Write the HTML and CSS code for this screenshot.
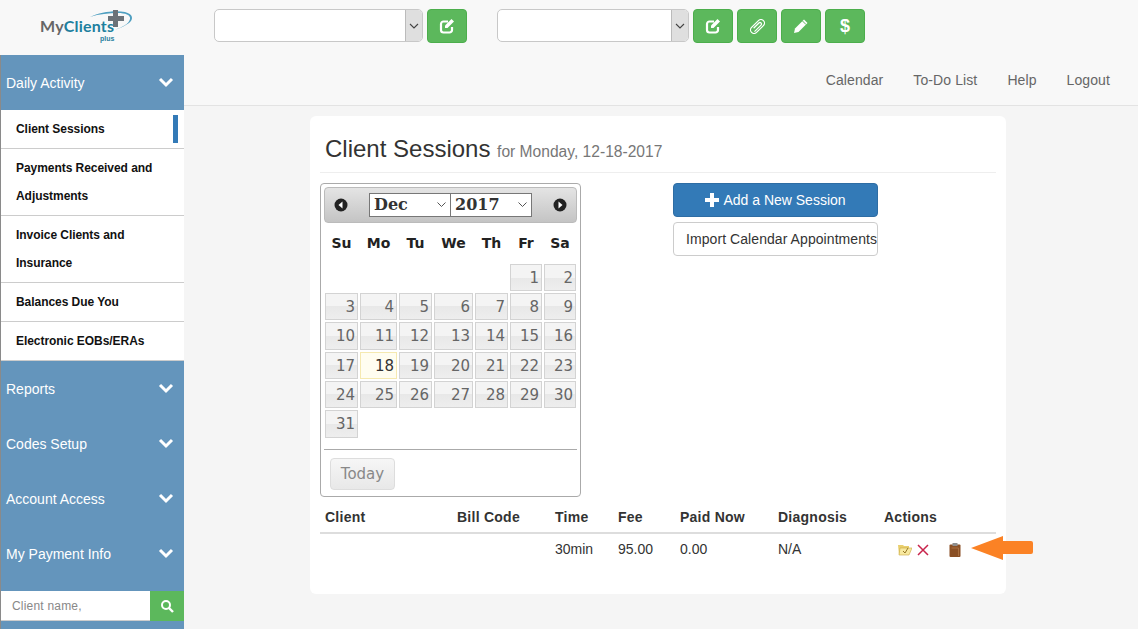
FILE: index.html
```html
<!DOCTYPE html>
<html lang="en">
<head>
  <meta charset="UTF-8" />
  <meta name="viewport" content="width=device-width, initial-scale=1" />
  <title>Client Sessions</title>
  <link rel="stylesheet" href="styles.css">
</head>
<body>
  <header class="topbar">
    <div class="logo">
      <span class="logo-text"><span class="logo-my">My</span>Clients</span>
      <span class="logo-plus">plus</span>
      <svg class="logo-mark" width="46" height="26" viewBox="0 0 46 26">
        <path d="M1 8C11 3 26 1 36 3c8 2 9 7 4 11-4 3-9 5-14 7 7-3 14-6 15-11 1-4-5-6-12-6C20 4 10 5 1 8z" fill="#4f9fc0"/>
        <path d="M24 1h5v6h6v5h-6v6h-5v-6h-5V7h5z" fill="#6b7278"/>
      </svg>
    </div>
    <div class="top-controls">
      <div class="combo combo-first"><span class="combo-arrow"><svg width="10" height="6" viewBox="0 0 10 6"><path d="M1 1l4 4 4-4" fill="none" stroke="#444" stroke-width="1.1"/></svg></span></div>
      <button class="btn-green" type="button"><svg width="16" height="16" viewBox="0 0 16 16"><path d="M13 9v3a2.500 2.500 0 0 1-2.500 2.500h-6A2.500 2.500 0 0 1 2 12V6a2.500 2.500 0 0 1 2.500-2.500H9" fill="none" stroke="#fff" stroke-width="2.200"/><path d="M6 7.500L12.500 1 15 3.500 8.500 10H6z" fill="#fff"/></svg></button>
      <div class="combo combo-second"><span class="combo-arrow"><svg width="10" height="6" viewBox="0 0 10 6"><path d="M1 1l4 4 4-4" fill="none" stroke="#444" stroke-width="1.1"/></svg></span></div>
      <div class="btn-row">
        <button class="btn-green" type="button"><svg width="16" height="16" viewBox="0 0 16 16"><path d="M13 9v3a2.500 2.500 0 0 1-2.500 2.500h-6A2.500 2.500 0 0 1 2 12V6a2.500 2.500 0 0 1 2.500-2.500H9" fill="none" stroke="#fff" stroke-width="2.200"/><path d="M6 7.500L12.500 1 15 3.500 8.500 10H6z" fill="#fff"/></svg></button>
        <button class="btn-green" type="button"><svg width="15" height="15" viewBox="0 0 17 17"><g transform="rotate(45 8.500 8.500)" fill="none" stroke="#fff" stroke-width="1.400"><rect x="4.500" y="-1" width="8" height="19" rx="4"/><path d="M6.800 13V4.500a1.700 1.700 0 0 1 3.400 0V15"/></g></svg></button>
        <button class="btn-green" type="button"><svg width="16" height="16" viewBox="0 0 16 16"><path d="M1 15l1-4.500L11 1.500 14.500 5l-9 9z" fill="#fff"/><path d="M9.500 3L13 6.500" stroke="#5cb85c"/></svg></button>
        <button class="btn-green btn-dollar" type="button">$</button>
      </div>
    </div>
  </header>

  <div class="layout">
    <aside class="sidebar">
      <div class="side-head">Daily Activity <svg class="chev" width="16" height="11" viewBox="0 0 16 11"><path d="M2 2l6 6 6-6" fill="none" stroke="#fff" stroke-width="3"/></svg></div>
      <ul class="side-menu">
        <li class="current">Client Sessions</li>
        <li>Payments Received and Adjustments</li>
        <li>Invoice Clients and Insurance</li>
        <li>Balances Due You</li>
        <li>Electronic EOBs/ERAs</li>
      </ul>
      <div class="side-head">Reports <svg class="chev" width="16" height="11" viewBox="0 0 16 11"><path d="M2 2l6 6 6-6" fill="none" stroke="#fff" stroke-width="3"/></svg></div>
      <div class="side-head">Codes Setup <svg class="chev" width="16" height="11" viewBox="0 0 16 11"><path d="M2 2l6 6 6-6" fill="none" stroke="#fff" stroke-width="3"/></svg></div>
      <div class="side-head">Account Access <svg class="chev" width="16" height="11" viewBox="0 0 16 11"><path d="M2 2l6 6 6-6" fill="none" stroke="#fff" stroke-width="3"/></svg></div>
      <div class="side-head">My Payment Info <svg class="chev" width="16" height="11" viewBox="0 0 16 11"><path d="M2 2l6 6 6-6" fill="none" stroke="#fff" stroke-width="3"/></svg></div>
      <form class="side-search" onsubmit="return false;">
        <input type="text" placeholder="Client name," />
        <button type="button"><svg width="14" height="14" viewBox="0 0 14 14"><circle cx="6" cy="6" r="4" fill="none" stroke="#fff" stroke-width="2"/><path d="M9 9l4 4" stroke="#fff" stroke-width="2.400"/></svg></button>
      </form>
    </aside>

    <main class="content">
      <nav class="subnav">
        <a>Calendar</a>
        <a>To-Do List</a>
        <a>Help</a>
        <a>Logout</a>
      </nav>

      <section class="card">
        <h1>Client Sessions <small>for Monday, 12-18-2017</small></h1>

        <div class="card-row">
          <div class="calendar">
            <div class="cal-head">
              <span class="cal-nav"><svg width="14" height="14" viewBox="0 0 14 14"><circle cx="7" cy="7" r="6.500" fill="#222"/><path d="M8.500 3.500v7L4.500 7z" fill="#fff"/></svg></span>
              <div class="cal-selects">
                <span class="cal-select cal-month">Dec<svg width="9" height="5" viewBox="0 0 9 5"><path d="M.5.500l4 4 4-4" fill="none" stroke="#555"/></svg></span>
                <span class="cal-select cal-year">2017<svg width="9" height="5" viewBox="0 0 9 5"><path d="M.5.500l4 4 4-4" fill="none" stroke="#555"/></svg></span>
              </div>
              <span class="cal-nav"><svg width="14" height="14" viewBox="0 0 14 14"><circle cx="7" cy="7" r="6.500" fill="#222"/><path d="M5.500 3.500v7l4-3.500z" fill="#fff"/></svg></span>
            </div>
            <table class="cal-grid">
              <colgroup><col class="c33"><col class="c37"><col class="c33"><col class="c39"><col class="c33"><col class="c32"><col class="c32"></colgroup>
              <thead>
                <tr><th>Su</th><th>Mo</th><th>Tu</th><th>We</th><th>Th</th><th>Fr</th><th>Sa</th></tr>
              </thead>
              <tbody>
                <tr><td class="empty"></td><td class="empty"></td><td class="empty"></td><td class="empty"></td><td class="empty"></td><td>1</td><td>2</td></tr>
                <tr><td>3</td><td>4</td><td>5</td><td>6</td><td>7</td><td>8</td><td>9</td></tr>
                <tr class="row-tall"><td>10</td><td>11</td><td>12</td><td>13</td><td>14</td><td>15</td><td>16</td></tr>
                <tr><td>17</td><td class="today">18</td><td>19</td><td>20</td><td>21</td><td>22</td><td>23</td></tr>
                <tr><td>24</td><td>25</td><td>26</td><td>27</td><td>28</td><td>29</td><td>30</td></tr>
                <tr class="row-tall"><td>31</td><td class="empty"></td><td class="empty"></td><td class="empty"></td><td class="empty"></td><td class="empty"></td><td class="empty"></td></tr>
              </tbody>
            </table>
            <div class="cal-foot"><button type="button">Today</button></div>
          </div>

          <div class="session-actions">
            <button class="btn-add" type="button"><svg width="14" height="14" viewBox="0 0 14 14"><path d="M5 0h4v5h5v4H9v5H5V9H0V5h5z" fill="#fff"/></svg>Add a New Session</button>
            <button class="btn-import" type="button">Import Calendar Appointments</button>
          </div>
        </div>

        <table class="sessions">
          <thead>
            <tr><th class="col-client">Client</th><th class="col-code">Bill Code</th><th class="col-time">Time</th><th class="col-fee">Fee</th><th class="col-paid">Paid Now</th><th class="col-diag">Diagnosis</th><th>Actions</th></tr>
          </thead>
          <tbody>
            <tr>
              <td></td><td></td><td>30min</td><td>95.00</td><td>0.00</td><td>N/A</td>
              <td class="actions">
                <svg class="act-open" width="15" height="12" viewBox="0 0 15 12"><path d="M1 1h5l1 1h5v9H2z" fill="#e9cf6e"/><path d="M3 4h12l-3 7H2z" fill="#f8e9a0" stroke="#c9a93f" stroke-width=".6"/><path d="M6 7l2 2 3-5" fill="none" stroke="#8a6a1a" stroke-width=".9"/></svg>
                <svg class="act-del" width="12" height="12" viewBox="0 0 12 12"><path d="M1 1l10 10M11 1L1 11" stroke="#c8244c" stroke-width="1.500"/></svg>
                <svg class="act-clip" width="12" height="14" viewBox="0 0 12 14"><rect x=".5" y="1.500" width="11" height="12.500" rx="1" fill="#8a4f24"/><rect x="3.500" y="0" width="5" height="3" fill="#8d8d8d"/><path d="M2.500 5h7M9.500 5v8" stroke="#a96f3f"/></svg>
                <svg class="arrow-note" width="64" height="26" viewBox="0 0 64 26"><path d="M1 13L33 1v5h28a2 2 0 0 1 2 2v9a2 2 0 0 1-2 2H33v6z" fill="#fb8225"/></svg>
              </td>
            </tr>
          </tbody>
        </table>
      </section>
    </main>
  </div>
</body>
</html>
```

FILE: styles.css
```css
* {
  box-sizing: border-box;
}
html, body {
  height: 100%;
}
body {
  margin: 0;
  font-family: "Liberation Sans", Arial, sans-serif;
  font-size: 14px;
  color: #333;
  background: #f8f8f8;
  overflow: hidden;
}

/* Top bar */
.topbar {
  display: flex;
  height: 55px;
}
.logo {
  position: relative;
  width: 184px;
  flex: none;
}
.logo-text {
  position: absolute;
  left: 40px;
  top: 18px;
  font-family: Lato, sans-serif;
  font-size: 16px;
  line-height: 15px;
  font-weight: 700;
  letter-spacing: 0.2px;
  color: #1d7f9e;
}
.logo-my {
  color: #666;
}
.logo-plus {
  position: absolute;
  left: 100px;
  top: 35px;
  font-size: 7px;
  line-height: 7px;
  font-weight: bold;
  color: #2a7f9e;
}
.logo-mark {
  position: absolute;
  left: 89px;
  top: 9px;
}
.top-controls {
  display: flex;
  align-items: flex-start;
  padding: 9px 0 0 30px;
}
.combo {
  height: 33px;
  display: flex;
  justify-content: flex-end;
  background: #fff;
  border: 1px solid #c8c8c8;
  border-radius: 5px;
  overflow: hidden;
}
.combo-first {
  width: 209px;
  margin-right: 4px;
}
.combo-second {
  width: 192px;
  margin: 0 4px 0 30px;
}
.combo-arrow {
  width: 17px;
  display: flex;
  align-items: center;
  justify-content: center;
  background: #dfdfdf;
  border-left: 1px solid #bbb;
}
.btn-row {
  display: flex;
  gap: 4px;
}
.btn-green {
  width: 40px;
  height: 34px;
  padding: 0;
  display: flex;
  align-items: center;
  justify-content: center;
  background: #5cb85c;
  border: 1px solid #4cae4c;
  border-radius: 4px;
  color: #fff;
}
.btn-dollar {
  font-size: 18px;
  font-weight: bold;
}

/* Sidebar */
.layout {
  display: flex;
  height: 574px;
}
.sidebar {
  width: 184px;
  flex: none;
  background: #6495bc;
  border-left: 1px solid #8a8a8a;
}
.side-head {
  height: 55px;
  padding: 0 10px 0 5px;
  display: flex;
  align-items: center;
  justify-content: space-between;
  font-size: 14px;
  color: #fff;
}
.side-menu {
  margin: 0;
  padding: 0;
  list-style: none;
  background: #fff;
}
.side-menu li {
  padding: 5px 30px 5px 15px;
  font-size: 12px;
  font-weight: bold;
  line-height: 28px;
  letter-spacing: -0.05px;
  color: #111;
  border-bottom: 1px solid #ccc;
  position: relative;
}
.side-menu li.current:after {
  content: "";
  position: absolute;
  right: 6px;
  top: 5px;
  width: 5px;
  height: 28px;
  background: #337ab7;
}
.side-search {
  display: flex;
  height: 30px;
  margin-top: 10px;
}
.side-search input {
  flex: 1;
  min-width: 0;
  padding: 0 11px;
  font-family: inherit;
  font-size: 12px;
  letter-spacing: 0.2px;
  border: none;
  border-bottom: 1px solid #ccc;
  background: #fff;
}
.side-search input::placeholder {
  color: #888;
}
.side-search button {
  width: 34px;
  padding: 0;
  display: flex;
  align-items: center;
  justify-content: center;
  background: #5cb85c;
  border: none;
}

/* Main */
.content {
  flex: 1;
  background: #f5f5f5;
}
.subnav {
  height: 51px;
  display: flex;
  justify-content: flex-end;
  align-items: center;
  gap: 30px;
  padding: 0 28px 0 0;
  background: #f8f8f8;
  border-bottom: 1px solid #e3e3e3;
  color: #666;
  font-size: 14px;
  letter-spacing: 0.1px;
}
.card {
  width: 696px;
  height: 478px;
  margin: 10px 0 0 126px;
  padding: 0 10px;
  background: #fff;
  border-radius: 6px;
}
.card h1 {
  margin: 0;
  height: 57px;
  padding: 17px 0 0 5px;
  font-size: 24px;
  font-weight: normal;
  line-height: 32px;
  color: #333;
  border-bottom: 1px solid #eee;
}
.card h1 small {
  font-size: 15.6px;
  color: #777;
}
.card-row {
  display: flex;
  align-items: flex-start;
  padding-top: 10px;
}

/* Calendar */
.calendar {
  width: 261px;
  height: 314px;
  flex: none;
  padding: 3px;
  background: #fff;
  border: 1px solid #aaa;
  border-radius: 4px;
  font-family: "DejaVu Sans", Verdana, sans-serif;
}
.cal-head {
  height: 36px;
  display: flex;
  align-items: center;
  justify-content: space-between;
  padding: 0 9px 1px;
  background: linear-gradient(#e4e4e4, #c4c4c4);
  border: 1px solid #bbb;
  border-radius: 4px;
}
.cal-nav {
  display: flex;
}
.cal-selects {
  display: flex;
}
.cal-select {
  height: 24px;
  display: flex;
  align-items: center;
  justify-content: space-between;
  padding: 0 4px;
  font-family: "DejaVu Serif", serif;
  font-size: 16px;
  font-weight: bold;
  color: #333;
  background: #fff;
  border: 1px solid #777;
}
.cal-month {
  width: 82px;
}
.cal-year {
  width: 82px;
  margin-left: -1px;
}
.cal-grid {
  width: 255px;
  margin-top: 0;
  table-layout: fixed;
  border-collapse: separate;
  border-spacing: 2px;
  margin-left: -1px;
}
.c33 { width: 33px; }
.c37 { width: 37px; }
.c39 { width: 39px; }
.c32 { width: 32px; }
.cal-grid th {
  height: 37px;
  padding: 0 0 2px;
  font-size: 14px;
  color: #222;
}
.cal-grid td {
  height: 27px;
  padding: 0 2px 0 0;
  text-align: right;
  font-size: 15px;
  color: #666;
  background: linear-gradient(#f4f4f4 50%, #e8e8e8 50%, #eee);
  border: 1px solid #d3d3d3;
}
.cal-grid .row-tall td {
  height: 28px;
}
.cal-grid td.empty {
  background: none;
  border: none;
}
.cal-grid td.today {
  color: #333;
  background: #fffdf0;
  border-color: #f5e9b0;
}
.cal-foot {
  margin-top: 9px;
  padding: 8px 6px 0;
  border-top: 1px solid #aaa;
}
.cal-foot button {
  width: 65px;
  height: 32px;
  padding: 0;
  font-family: inherit;
  font-size: 15px;
  color: #888;
  background: linear-gradient(#f6f6f6, #e8e8e8);
  border: 1px solid #ddd;
  border-radius: 4px;
}

/* Add and import */
.session-actions {
  width: 205px;
  margin-left: 92px;
  display: flex;
  flex-direction: column;
  gap: 5px;
}
.session-actions button {
  width: 205px;
  height: 34px;
  padding: 0;
  font-family: inherit;
  font-size: 14px;
  border-radius: 4px;
  white-space: nowrap;
}
.btn-add {
  display: flex;
  align-items: center;
  justify-content: center;
  gap: 4px;
  color: #fff;
  background: #337ab7;
  border: 1px solid #2e6da4;
}
.btn-import {
  padding-left: 12px !important;
  text-align: left;
  letter-spacing: 0.07px;
  color: #333;
  background: #fff;
  border: 1px solid #ccc;
  overflow: hidden;
}

/* Sessions table */
.sessions {
  width: 676px;
  margin-top: 10px;
  table-layout: fixed;
  border-collapse: collapse;
}
.sessions th {
  height: 26px;
  padding: 0 5px 6px;
  text-align: left;
  font-size: 14px;
  letter-spacing: 0.25px;
  color: #333;
  border-bottom: 2px solid #ddd;
}
.sessions td {
  height: 32px;
  padding: 0 5px 2px;
  font-size: 14px;
  color: #333;
}
.col-client { width: 132px; }
.col-code { width: 98px; }
.col-time { width: 63px; }
.col-fee { width: 62px; }
.col-paid { width: 98px; }
.col-diag { width: 106px; }
.sessions td.actions {
  position: relative;
  padding-left: 18px;
  white-space: nowrap;
}
.actions svg {
  vertical-align: middle;
}
.act-del {
  margin-left: 1px;
}
.act-clip {
  margin-left: 16px;
}
.arrow-note {
  position: absolute;
  left: 91px;
  top: 1px;
}
```
